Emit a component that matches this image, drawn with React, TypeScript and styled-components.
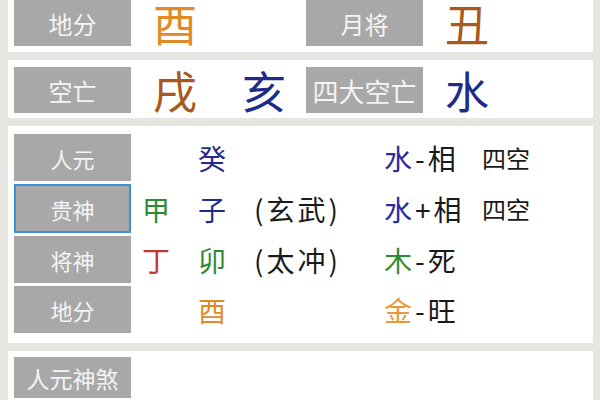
import React from "react";
import styled, { createGlobalStyle } from "styled-components";

const Global = createGlobalStyle`
  html, body { margin: 0; padding: 0; }
  body {
    background: #e7e5df;
    font-family: "Noto Sans CJK SC", "Noto Sans", sans-serif;
    width: 600px; height: 400px; overflow: hidden;
  }
`;

const Page = styled.div`
  display: flex;
  flex-direction: column;
  gap: 8px;
  padding: 0 7px 0 8px;
  margin-top: -6px;
`;

const Panel = styled.div<{ $pt?: number; $pb?: number }>`
  background: #ffffff;
  padding: ${(p) => p.$pt ?? 6}px 6px ${(p) => p.$pb ?? 6}px 6px;
  display: flex;
  flex-direction: column;
  gap: 3px;
`;

const TopRow = styled.div`
  display: grid;
  grid-template-columns: 117px 175px 117px 1fr;
  align-items: center;
`;

const Label = styled.div<{ $size?: number; $active?: boolean; $h?: number }>`
  background: #a8a8a8;
  color: #f4f4f4;
  height: ${(p) => p.$h ?? 46}px;
  box-sizing: border-box;
  display: flex;
  align-items: center;
  justify-content: center;
  font-size: ${(p) => p.$size ?? 24}px;
  white-space: nowrap;
  letter-spacing: 0;
  border: ${(p) => (p.$active ? "2px solid #3d8fd6" : "none")};
`;

const BigValues = styled.div`
  display: flex;
  align-items: center;
  gap: 45px;
  padding-left: 22px;
`;

const Big = styled.span<{ $c: string }>`
  font-size: 44px;
  line-height: 46px;
  color: ${(p) => p.$c};
`;

const DetailRow = styled.div`
  display: grid;
  grid-template-columns: 117px 56px 56px 130px 98px 1fr;
  align-items: center;
`;

const Cell = styled.span`
  padding-left: 11px;
  font-size: 28px;
  line-height: 46px;
  letter-spacing: 3px;
  color: #1a1a1a;
  white-space: nowrap;
`;

const Small = styled.span`
  padding-left: 11px;
  font-size: 24px;
  line-height: 46px;
  color: #1a1a1a;
  white-space: nowrap;
`;

const C = styled.span<{ $c: string }>`
  color: ${(p) => p.$c};
`;

const ORANGE = "#e38a26";
const BROWN = "#a85a1c";
const NAVY = "#1e2a8c";
const BLUE = "#2a2aa0";
const GREEN = "#2f8a35";
const RED = "#c23a32";
const GOLD = "#e89a3a";

type Row = {
  label: string;
  a?: [string, string];
  b?: [string, string];
  note?: string;
  el?: [string, string];
  state?: string;
  extra?: string;
  active?: boolean;
};

const rows: Row[] = [
  { label: "人元", b: ["癸", NAVY], el: ["水", BLUE], state: "-相", extra: "四空" },
  { label: "贵神", a: ["甲", GREEN], b: ["子", NAVY], note: "(玄武)", el: ["水", BLUE], state: "+相", extra: "四空", active: true },
  { label: "将神", a: ["丁", RED], b: ["卯", GREEN], note: "(太冲)", el: ["木", GREEN], state: "-死" },
  { label: "地分", b: ["酉", ORANGE], el: ["金", GOLD], state: "-旺" },
];

export default function App() {
  return (
    <>
      <Global />
      <Page>
        <Panel>
          <TopRow>
            <Label>地分</Label>
            <BigValues>
              <Big $c={ORANGE}>酉</Big>
            </BigValues>
            <Label>月将</Label>
            <BigValues>
              <Big $c={BROWN}>丑</Big>
            </BigValues>
          </TopRow>
        </Panel>
        <Panel $pt={7} $pb={5}>
          <TopRow>
            <Label>空亡</Label>
            <BigValues>
              <Big $c={BROWN}>戌</Big>
              <Big $c={NAVY}>亥</Big>
            </BigValues>
            <Label $size={26}>四大空亡</Label>
            <BigValues>
              <Big $c={NAVY}>水</Big>
            </BigValues>
          </TopRow>
        </Panel>
        <Panel $pt={8} $pb={10}>
          {rows.map((r) => (
            <DetailRow key={r.label}>
              <Label $size={22} $active={r.active} $h={r.active ? 49 : 47}>
                {r.label}
              </Label>
              <Cell>{r.a && <C $c={r.a[1]}>{r.a[0]}</C>}</Cell>
              <Cell>{r.b && <C $c={r.b[1]}>{r.b[0]}</C>}</Cell>
              <Cell>{r.note}</Cell>
              <Cell>
                {r.el && <C $c={r.el[1]}>{r.el[0]}</C>}
                {r.state}
              </Cell>
              <Small>{r.extra}</Small>
            </DetailRow>
          ))}
        </Panel>
        <Panel>
          <DetailRow>
            <Label $size={23} $h={41}>人元神煞</Label>
          </DetailRow>
          <DetailRow>
            <Label $size={23} $h={41}>人元神煞</Label>
          </DetailRow>
        </Panel>
      </Page>
    </>
  );
}
